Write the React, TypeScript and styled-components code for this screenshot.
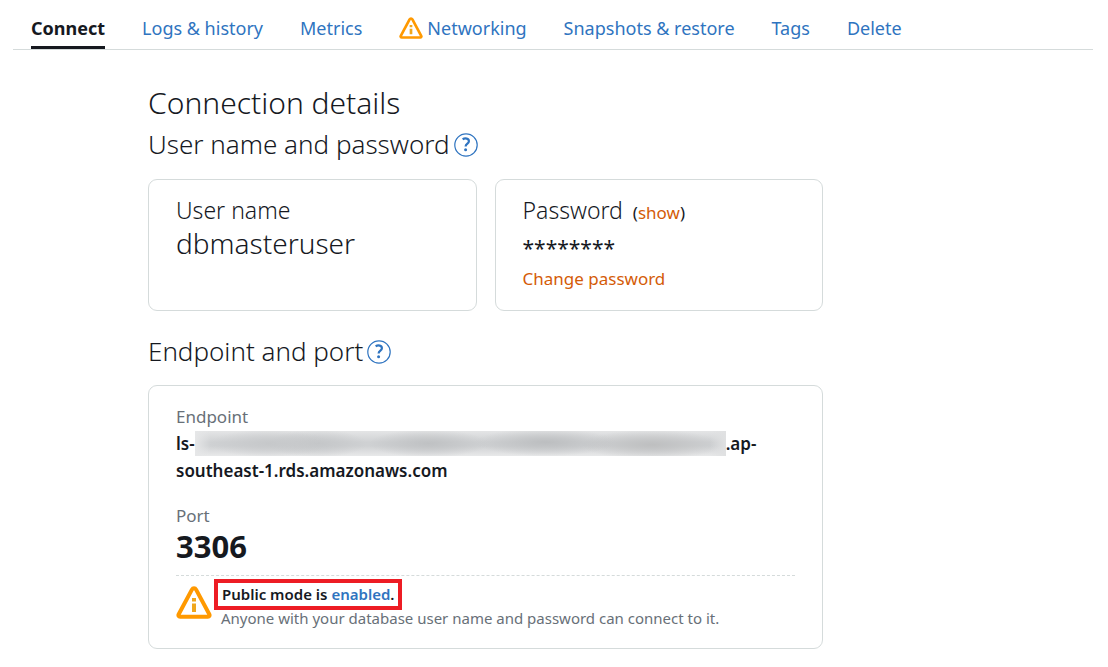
import React from "react";
import styled, { createGlobalStyle } from "styled-components";

const GlobalStyle = createGlobalStyle`
  *, *::before, *::after { box-sizing: border-box; }
  body {
    margin: 0;
    background: #fff;
    color: #16191f;
    font-family: "Noto Sans", "Open Sans", sans-serif;
    font-size: 16px;
    line-height: 24px;
  }
  h1, h2, h3, p, dl, dt, dd { margin: 0; font-weight: inherit; }
`;

const Page = styled.div`
  padding: 0 15px 18px 13px;
`;

const TabBar = styled.nav`
  display: flex;
  gap: 37px;
  height: 50px;
  padding: 8px 18px 0;
  border-bottom: 1px solid #d5dbdb;
`;

const Tab = styled.a<{ $active?: boolean }>`
  display: flex;
  align-items: center;
  gap: 4px;
  height: 41px;
  padding-bottom: ${(p) => (p.$active ? 0 : 3)}px;
  padding-top: 2px;
  border-bottom: ${(p) => (p.$active ? "3px solid #16191f" : "0")};
  color: ${(p) => (p.$active ? "#16191f" : "#2f74c0")};
  font-size: 18px;
  font-weight: ${(p) => (p.$active ? 700 : 400)};
  line-height: 28px;
  text-decoration: none;
  white-space: nowrap;
`;

const Content = styled.main`
  width: 62.5%;
  margin-left: 12.5%;
`;

const PageTitle = styled.h1`
  padding-top: 32px;
  font-size: 30px;
  font-weight: 300;
  line-height: 42px;
`;

const SectionTitle = styled.h2`
  display: flex;
  align-items: center;
  gap: 4px;
  font-size: 26px;
  font-weight: 300;
  line-height: 40px;
`;

const HelpButton = styled.button`
  display: flex;
  padding: 2px 0 0;
  border: 0;
  background: none;
  color: #2f74c0;
  cursor: pointer;
`;

const CardRow = styled.div`
  display: grid;
  grid-template-columns: 1fr 1fr;
  gap: 18px;
  margin: 15px 0 20px;
`;

const Card = styled.section`
  min-height: 132px;
  padding: 14px 27px;
  border: 1px solid #d5dbdb;
  border-radius: 9px;
`;

const EndpointCard = styled(Card)`
  margin-top: 14px;
  padding: 17px 27px 22px;
`;

const CardTitle = styled.h3`
  font-size: 23px;
  font-weight: 300;
  line-height: 32px;
`;

const UserName = styled.p`
  font-size: 28px;
  font-weight: 300;
  line-height: 34px;
`;

const ShowHint = styled.span`
  margin-left: 10px;
  font-size: 17px;
  font-weight: 400;
`;

const ActionLink = styled.a`
  color: #d45b07;
  font-size: 17px;
  text-decoration: none;
`;

const MaskedPassword = styled.p`
  font-size: 21px;
  line-height: 38px;
`;

const FieldLabel = styled.dt`
  color: #687078;
  font-size: 17px;
  line-height: 27px;
`;

const EndpointValue = styled.dd`
  margin-bottom: 18px;
  font-size: 17px;
  font-weight: 600;
  line-height: 27px;
`;

const Redacted = styled.span`
  display: inline-block;
  width: 531px;
  height: 25px;
  margin-top: 1px;
  vertical-align: top;
  background:
    linear-gradient(to right, #e6e7e8, transparent 3%, transparent 97%, #e0e1e2),
    radial-gradient(ellipse 60px 14px at 14% 50%, #c6c8ca, transparent),
    radial-gradient(ellipse 50px 14px at 23% 50%, #c4c6c8, transparent),
    radial-gradient(ellipse 60px 14px at 44% 50%, #bfc1c3, transparent),
    radial-gradient(ellipse 70px 14px at 66% 45%, #bcbec0, transparent),
    radial-gradient(ellipse 70px 15px at 86% 55%, #bebfc0, transparent),
    linear-gradient(#e4e5e6, #cfd1d3 45%, #cfd1d3 60%, #e8e9ea);
`;

const PortValue = styled.dd`
  font-size: 31px;
  font-weight: 700;
  line-height: 34px;
`;

const Notice = styled.div`
  display: flex;
  gap: 2px;
  margin-top: 12px;
  padding-top: 3px;
  border-top: 1px dashed #d5dbdb;
`;

const NoticeIcon = styled.span`
  display: flex;
  padding-top: 7px;
`;

const Highlight = styled.p`
  width: max-content;
  padding: 0 4px;
  border: 4px solid #ed1c24;
  font-size: 15px;
  font-weight: 600;
  line-height: 23px;
`;

const ModeLink = styled.a`
  color: #2f74c0;
  text-decoration: none;
`;

const NoticeText = styled.p`
  padding-left: 7px;
  color: #687078;
  font-size: 15px;
  line-height: 16px;
`;

function WarningIcon({ width, height }: { width: number; height: number }) {
  return (
    <svg width={width} height={height} viewBox="0 0 36 33" fill="none" aria-hidden="true">
      <path
        d="M15.9 3.6 2.7 28.2c-.7 1.3 0 2.5 1.4 2.5h27.8c1.4 0 2.1-1.2 1.4-2.5L20.1 3.6c-1-1.8-3.2-1.8-4.2 0Z"
        stroke="#ff9900"
        strokeWidth="4"
        strokeLinejoin="round"
      />
      <path d="M16 12h4v3.5h-4zM16 17.5h4V26h-4z" fill="#f0a71c" />
    </svg>
  );
}

function HelpIcon() {
  return (
    <svg width="24" height="24" viewBox="0 0 24 24" fill="none" aria-hidden="true">
      <circle cx="12" cy="12" r="11.2" stroke="currentColor" strokeWidth="1.2" />
      <path
        d="M8.6 6.2c2.6-1.4 6.3-.9 6.3 2 0 2.4-3.3 2.4-3.3 5.3"
        stroke="currentColor"
        strokeWidth="2.2"
      />
      <circle cx="11.6" cy="16.7" r="1.5" fill="currentColor" />
    </svg>
  );
}

const tabs = [
  { label: "Connect", active: true },
  { label: "Logs & history" },
  { label: "Metrics" },
  { label: "Networking", warning: true },
  { label: "Snapshots & restore" },
  { label: "Tags" },
  { label: "Delete" },
];

export default function App() {
  return (
    <>
      <GlobalStyle />
      <Page>
        <TabBar>
          {tabs.map((tab) => (
            <Tab key={tab.label} href="#" $active={tab.active} aria-current={tab.active ? "page" : undefined}>
              {tab.warning && <WarningIcon width={24} height={22} />}
              {tab.label}
            </Tab>
          ))}
        </TabBar>
        <Content>
          <PageTitle>Connection details</PageTitle>
          <SectionTitle>
            User name and password
            <HelpButton aria-label="Help with user name and password">
              <HelpIcon />
            </HelpButton>
          </SectionTitle>
          <CardRow>
            <Card>
              <CardTitle>User name</CardTitle>
              <UserName>dbmasteruser</UserName>
            </Card>
            <Card>
              <CardTitle>
                Password
                <ShowHint>
                  (<ActionLink href="#">show</ActionLink>)
                </ShowHint>
              </CardTitle>
              <MaskedPassword>********</MaskedPassword>
              <ActionLink href="#">Change password</ActionLink>
            </Card>
          </CardRow>
          <SectionTitle>
            Endpoint and port
            <HelpButton aria-label="Help with endpoint and port">
              <HelpIcon />
            </HelpButton>
          </SectionTitle>
          <EndpointCard>
            <dl>
              <FieldLabel>Endpoint</FieldLabel>
              <EndpointValue>
                <span>ls-</span>
                <Redacted />
                <span>.ap-</span>
                <wbr />
                <span>southeast-1.rds.amazonaws.com</span>
              </EndpointValue>
              <FieldLabel>Port</FieldLabel>
              <PortValue>3306</PortValue>
            </dl>
            <Notice>
              <NoticeIcon>
                <WarningIcon width={36} height={33} />
              </NoticeIcon>
              <div>
                <Highlight>
                  Public mode is <ModeLink href="#">enabled</ModeLink>.
                </Highlight>
                <NoticeText>Anyone with your database user name and password can connect to it.</NoticeText>
              </div>
            </Notice>
          </EndpointCard>
        </Content>
      </Page>
    </>
  );
}
